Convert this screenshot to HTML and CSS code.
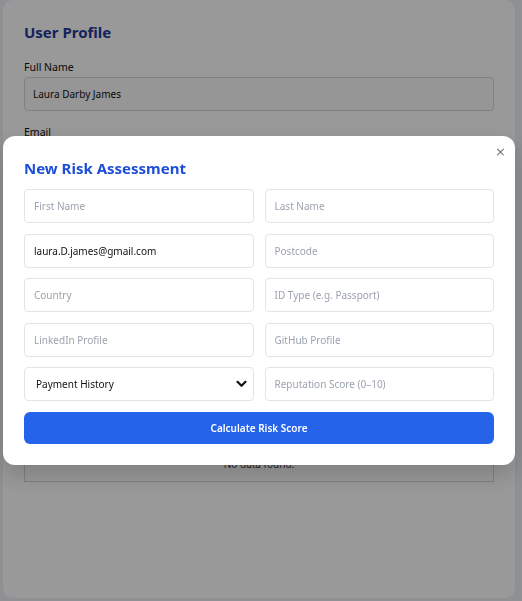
FILE: index.html
```html
<!DOCTYPE html>
<html lang="en">
<head>
<meta charset="utf-8">
<title>User Profile</title>
<link rel="stylesheet" href="styles.css">
</head>
<body>
<main class="card">
  <h1 class="card-title">User Profile</h1>
  <div class="field">
    <span class="label">Full Name</span>
    <div class="bg-input">Laura Darby James</div>
  </div>
  <div class="field">
    <span class="label">Email</span>
    <div class="bg-input"></div>
  </div>
  <div class="table-box">
    <div class="table-head"></div>
    <div class="table-empty">No data found.</div>
  </div>
</main>

<div class="overlay">
  <div class="modal">
    <button class="close" type="button" aria-label="Close">×</button>
    <h2 class="modal-title">New Risk Assessment</h2>
    <div class="grid">
      <div class="inp ph">First Name</div>
      <div class="inp ph">Last Name</div>
      <div class="inp">laura.D.james@gmail.com</div>
      <div class="inp ph">Postcode</div>
      <div class="inp ph">Country</div>
      <div class="inp ph">ID Type (e.g. Passport)</div>
      <div class="inp ph">LinkedIn Profile</div>
      <div class="inp ph">GitHub Profile</div>
      <div class="inp select">
        <span>Payment History</span>
        <svg class="chev" width="11" height="8" viewBox="0 0 11 8"><path d="M1.5 1.8 L5.5 5.8 L9.5 1.8" fill="none" stroke="#111" stroke-width="2.2" stroke-linecap="round" stroke-linejoin="round"/></svg>
      </div>
      <div class="inp ph">Reputation Score (0–10)</div>
    </div>
    <button class="primary" type="button">Calculate Risk Score</button>
  </div>
</div>
</body>
</html>
```

FILE: styles.css
```css
* { box-sizing: border-box; }
html, body { margin: 0; padding: 0; }
body {
  background: #eef0f6;
  font-family: "Noto Sans", "Open Sans", sans-serif;
  color: #111827;
  height: 601px;
  overflow: hidden;
}
.card {
  width: 512px;
  height: 598px;
  margin-left: 3px;
  background: #fff;
  border-radius: 10px;
  padding: 20px 21px;
}
.card-title {
  margin: 0 0 15px;
  font-size: 15px;
  line-height: 24px;
  font-weight: 700;
  color: #1e3a9a;
}
.field { margin-bottom: 13px; }
.label {
  display: block;
  font-size: 10.5px;
  line-height: 16px;
  margin-bottom: 2px;
  color: #111;
}
.bg-input {
  display: flex;
  align-items: center;
  width: 100%;
  height: 34px;
  border: 1px solid #d8d8d8;
  border-radius: 4px;
  background: #fafafa;
  padding: 0 8px;
  font-size: 10px;
  color: #111;
}
.table-box {
  margin-top: 237px;
  border: 1px solid #d5d5d5;
}
.table-head {
  height: 33px;
  border-bottom: 1px solid #d5d5d5;
}
.table-empty {
  height: 34px;
  display: flex;
  align-items: center;
  justify-content: center;
  font-size: 10px;
  color: #444;
}
.overlay {
  position: fixed;
  inset: 0;
  background: rgba(0, 0, 0, 0.4);
  display: flex;
  align-items: center;
  padding-left: 3px;
}
.modal {
  position: relative;
  width: 512px;
  background: #fff;
  border-radius: 12px;
  padding: 21px 21px 21px;
  box-shadow: 0 10px 25px rgba(0, 0, 0, 0.18);
}
.close {
  position: absolute;
  top: 8px;
  right: 9px;
  border: 0;
  background: none;
  padding: 0;
  font-family: "DejaVu Sans", sans-serif;
  font-size: 13px;
  line-height: 16px;
  color: #6b7280;
}
.modal-title {
  margin: 0 0 10px;
  font-size: 15px;
  line-height: 22px;
  font-weight: 700;
  color: #1d4ed8;
}
.grid {
  display: grid;
  grid-template-columns: 1fr 1fr;
  column-gap: 11px;
  row-gap: 10.5px;
  margin-bottom: 11px;
}
.inp {
  display: flex;
  align-items: center;
  width: 100%;
  height: 34px;
  border: 1px solid #e2e4e8;
  border-radius: 4px;
  background: #fff;
  padding: 0 9px;
  font-size: 10px;
  color: #111;
}
.ph { color: #9ca3af; }
.select {
  justify-content: space-between;
  padding: 0 6px 0 11px;
  color: #111;
}
.primary {
  display: block;
  width: 100%;
  height: 32px;
  border: 0;
  border-radius: 6px;
  background: #2563eb;
  color: #fff;
  font: inherit;
  font-size: 10px;
  font-weight: 600;
}
```
